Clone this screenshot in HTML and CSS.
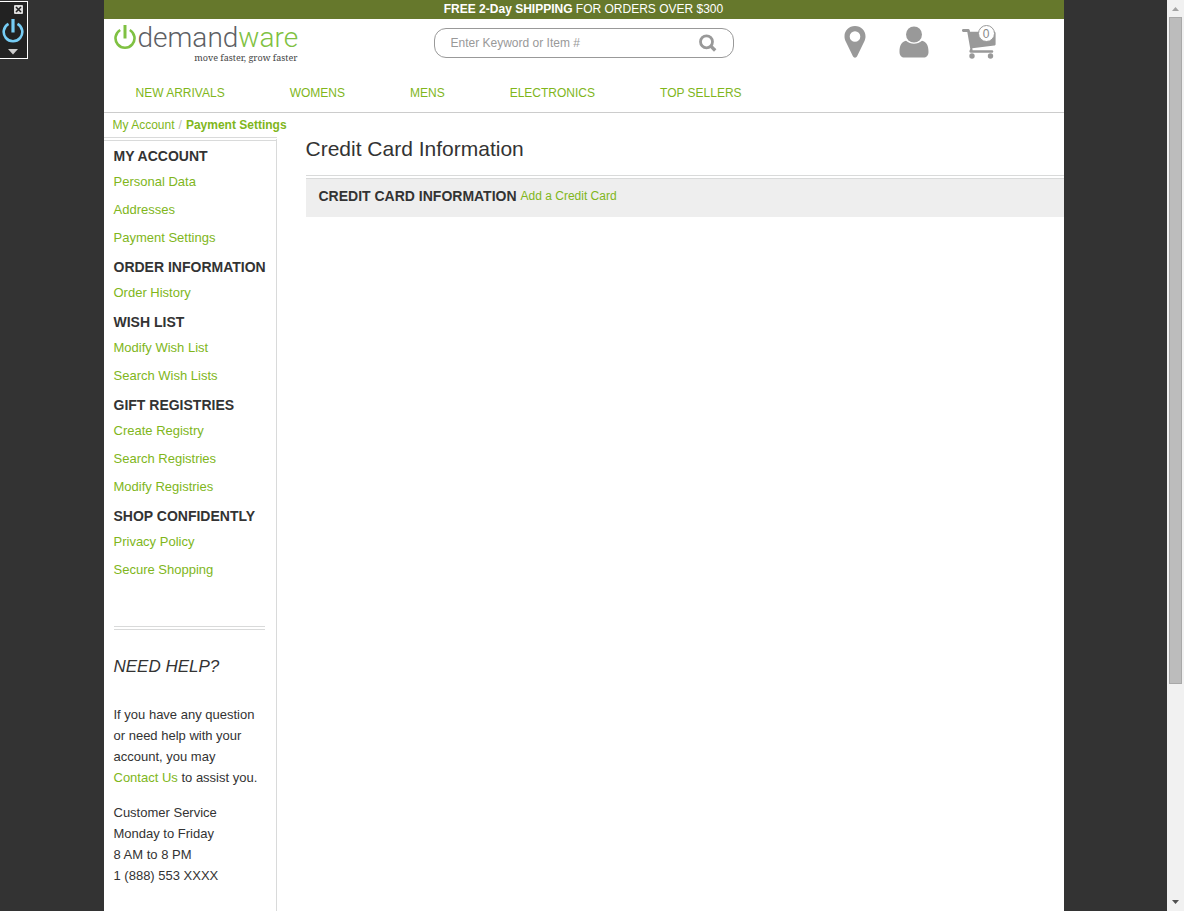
FILE: index.html
```html
<!DOCTYPE html>
<html lang="en">
<head>
<meta charset="utf-8">
<title>Payment Settings</title>
<link rel="stylesheet" href="styles.css">
</head>
<body>
<aside class="toolkit" aria-label="Storefront toolkit">
  <button class="toolkit-button toolkit-close" aria-label="Close toolkit">
    <svg width="9" height="9" viewBox="0 0 9 9"><rect width="9" height="9" rx="1" fill="#ddd"/><path d="M2 2l5 5M7 2l-5 5" stroke="#222" stroke-width="1.6"/></svg>
  </button>
  <button class="toolkit-button toolkit-power" aria-label="Toolkit">
    <svg width="22" height="24" viewBox="0 0 22 24" fill="none" stroke="#76cdf5" stroke-width="2.6"><path d="M6.500 4.800A9.300 9.300 0 1 0 15.500 4.800"/><path d="M11 0v13.500" stroke-width="3.200"/></svg>
  </button>
  <button class="toolkit-button toolkit-more" aria-label="Expand toolkit">
    <svg width="10" height="6" viewBox="0 0 10 6"><path d="M0 0h10L5 5.500z" fill="#ccc"/></svg>
  </button>
</aside>
<div class="stage">
<div class="page">
  <p class="promo"><strong>FREE 2-Day SHIPPING</strong> FOR ORDERS OVER $300</p>
  <header class="header">
    <div class="header-top">
      <a class="logo" href="#">
        <svg class="logo-mark" width="22" height="26" viewBox="0 0 22 26" fill="none" stroke="#7fc142" stroke-width="2.600"><path d="M6.200 6A9.500 9.500 0 1 0 15.800 6"/><path d="M11 1v13.500" stroke-width="3"/></svg>
        <span class="logo-text">
          <span class="logo-name">demand<span class="logo-accent">ware</span></span>
          <span class="logo-tagline">move faster, grow faster</span>
        </span>
      </a>
      <form class="search">
        <input class="search-input" type="text" placeholder="Enter Keyword or Item #" aria-label="Search catalog">
        <button class="search-button" type="button" aria-label="Search">
          <svg width="18" height="18" viewBox="0 0 18 18" fill="none" stroke="#999"><circle cx="7.500" cy="7.800" r="6" stroke-width="2.800"/><path d="M11.800 12.100l4.400 4.400" stroke-width="3.400"/></svg>
        </button>
      </form>
      <div class="tools">
        <a class="tool" href="#" aria-label="Stores"><svg width="22" height="32" viewBox="0 0 22 32"><path fill="#999" fill-rule="evenodd" d="M11 0C5 0 .5 4.500.5 10.200c0 2 .4 3.300 1 4.700l7.400 15.400c.9 1.800 3.300 1.800 4.200 0l7.400-15.400c.6-1.400 1-2.700 1-4.700C21.500 4.500 17 0 11 0zm0 5.200a5.300 5.300 0 1 1 0 10.600 5.300 5.300 0 0 1 0-10.600z"/></svg></a>
        <a class="tool" href="#" aria-label="User"><svg width="30" height="32" viewBox="0 0 30 32" fill="#999"><circle cx="15" cy="8.500" r="8"/><path d="M7 14.800c4.700 4 11.300 4 16 0 4.400.8 6.500 4.600 6.500 11.200 0 3.500-2 5.500-5 5.500h-19c-3 0-5-2-5-5.500C.5 19.400 2.600 15.600 7 14.800z"/></svg></a>
        <a class="tool tool-cart" href="#" aria-label="Cart"><svg width="34" height="30" viewBox="0 0 34 30" fill="#999"><path d="M0 1.500C0 .7.500.1 1.300.1h5c1.200 0 1.500 1 1.700 2.700h24.200c.8 0 1.400.6 1.400 1.400v11c0 .7-.5 1.200-1.200 1.300L10.300 19.200l.3 2H30c1.700 0 1.700 2.600 0 2.600H9c-1.700 0-1.900-1.400-1.300-2.500l.6-1.300L5.300 2.900h-4C.5 2.900 0 2.300 0 1.500z"/><circle cx="10" cy="27" r="2.700"/><circle cx="28.500" cy="27" r="2.700"/></svg><span class="cart-count">0</span></a>
      </div>
    </div>
    <nav class="nav">
      <a href="#">NEW ARRIVALS</a><a href="#">WOMENS</a><a href="#">MENS</a><a href="#">ELECTRONICS</a><a href="#">TOP SELLERS</a>
    </nav>
  </header>
  <nav class="breadcrumb"><a href="#">My Account</a><span class="slash">/</span><a class="current" href="#">Payment Settings</a></nav>
  <div class="columns">
    <aside class="sidebar">
      <h2>MY ACCOUNT</h2>
      <ul><li><a href="#">Personal Data</a></li><li><a href="#">Addresses</a></li><li><a href="#">Payment Settings</a></li></ul>
      <h2>ORDER INFORMATION</h2>
      <ul><li><a href="#">Order History</a></li></ul>
      <h2>WISH LIST</h2>
      <ul><li><a href="#">Modify Wish List</a></li><li><a href="#">Search Wish Lists</a></li></ul>
      <h2>GIFT REGISTRIES</h2>
      <ul><li><a href="#">Create Registry</a></li><li><a href="#">Search Registries</a></li><li><a href="#">Modify Registries</a></li></ul>
      <h2>SHOP CONFIDENTLY</h2>
      <ul><li><a href="#">Privacy Policy</a></li><li><a href="#">Secure Shopping</a></li></ul>
      <section class="help">
        <h3>NEED HELP?</h3>
        <p>If you have any question<br>or need help with your<br>account, you may<br><a href="#">Contact Us</a> to assist you.</p>
        <p>Customer Service<br>Monday to Friday<br>8 AM to 8 PM<br>1 (888) 553 XXXX</p>
      </section>
    </aside>
    <main class="main">
      <h1>Credit Card Information</h1>
      <div class="panel"><h2>CREDIT CARD INFORMATION</h2><a href="#">Add a Credit Card</a></div>
    </main>
  </div>
</div>
</div>
<div class="scrollbar" aria-hidden="true">
  <svg width="7" height="4" viewBox="0 0 7 4"><path d="M3.500 0L7 4H0z" fill="#a3a3a3"/></svg>
  <div class="track"><div class="thumb"></div></div>
  <svg width="7" height="4" viewBox="0 0 7 4"><path d="M0 0h7L3.500 4z" fill="#505050"/></svg>
</div>
</body>
</html>
```
FILE: styles.css
```css
* { box-sizing: border-box; }

body {
  display: flex;
  min-height: 100vh;
  margin: 0;
  background: #333;
  color: #333;
  font: 12px/18px "Liberation Sans", Arial, sans-serif;
}

h1, h2, h3, p, ul { margin: 0; padding: 0; }
ul { list-style: none; }
a { color: #80b61b; text-decoration: none; }

button {
  display: flex;
  padding: 0;
  border: 0;
  background: none;
}

.toolkit {
  position: absolute;
  top: 1px;
  left: 0;
  display: flex;
  flex-direction: column;
  align-items: center;
  width: 28px;
  height: 58px;
  padding: 3px 2px 0 0;
  border: 1px solid #fff;
  border-left: 0;
  background: #222;
}
.toolkit-close { align-self: flex-end; margin-right: 2px; }
.toolkit-power { margin-top: 5px; }
.toolkit-more { margin-top: 6px; }

.stage {
  display: flex;
  flex: 1;
  justify-content: center;
}
.page {
  display: flex;
  flex-direction: column;
  width: 100%;
  max-width: 960px;
  background: #fff;
}

.promo {
  height: 19px;
  background: #66782c;
  color: #fff;
  line-height: 19px;
  text-align: center;
}

.header { border-bottom: 1px solid #ccc; }
.header-top {
  display: grid;
  grid-template-columns: 320px 300px 1fr;
  align-items: start;
  padding: 5px 68px 0 10px;
}

.logo { display: flex; gap: 2px; }
.logo-text { display: flex; flex-direction: column; width: 160px; }
.logo-name {
  color: #5d6064;
  font: 300 28px/28px Roboto, sans-serif;
}
.logo-accent { color: #7fc142; }
.logo-tagline {
  color: #444;
  font: 9px/12px "Noto Serif", "DejaVu Serif", serif;
  text-align: right;
  white-space: nowrap;
}

.search {
  display: flex;
  align-items: center;
  height: 30px;
  margin-top: 4px;
  padding: 0 16px;
  border: 1px solid #999;
  border-radius: 12px;
}
.search-input {
  flex: 1;
  min-width: 0;
  padding: 0;
  border: 0;
  outline: 0;
  background: none;
  font: 12px/16px "Liberation Sans", Arial, sans-serif;
}
.search-input::placeholder { color: #999; opacity: 1; }

.tools {
  display: flex;
  justify-content: flex-end;
  gap: 33px;
  padding-top: 2px;
}
.tool { display: flex; align-items: flex-end; }
.tool-cart { position: relative; margin-bottom: -1px; }
.cart-count {
  position: absolute;
  top: -1px;
  right: 1px;
  width: 17px;
  height: 17px;
  border: 1px solid #999;
  border-radius: 50%;
  background: #fff;
  color: #888;
  line-height: 16px;
  text-align: center;
}

.nav {
  display: flex;
  gap: 65px;
  padding: 20px 32px 10px;
}

.breadcrumb {
  display: flex;
  gap: 4px;
  padding: 3px 9px 0;
}
.breadcrumb .slash { color: #bbb; }
.breadcrumb .current { font-weight: bold; }

.columns {
  display: flex;
  flex: 1;
  margin-top: 3px;
}

.sidebar {
  width: 173px;
  padding: 6px 11px 8px 10px;
  border-top: 4px double #d9dada;
  border-right: 1px solid #d9dada;
  font-size: 13px;
}
.sidebar h2, .panel h2 {
  font-size: 14px;
  line-height: 18px;
  white-space: nowrap;
}
.sidebar ul { padding: 3px 0 6px; }
.sidebar li { padding: 5px 0; }

.help {
  margin-top: 36px;
  padding-top: 27px;
  border-top: 4px double #d9dada;
}
.help h3 {
  margin-bottom: 27px;
  font: italic 17px/20px "Liberation Sans", Arial, sans-serif;
}
.help p {
  margin-bottom: 14px;
  line-height: 21px;
  white-space: nowrap;
}

.main {
  flex: 1;
  margin-left: 29px;
}
.main h1 {
  font-size: 21px;
  font-weight: normal;
  line-height: 24px;
}
.panel {
  display: flex;
  gap: 4px;
  margin-top: 14px;
  padding: 8px 13px 12px;
  border-top: 4px double #d9dada;
  background: #eee;
  background-clip: padding-box;
}

.scrollbar {
  display: flex;
  flex-direction: column;
  align-items: center;
  width: 17px;
  padding: 7px 0;
  background: #f1f1f1;
}
.track {
  flex: 1;
  width: 13px;
  margin: 6px 0;
}
.thumb {
  height: 76%;
  border: 1px solid #a8a8a8;
  background: #bcbcbc;
}
```
